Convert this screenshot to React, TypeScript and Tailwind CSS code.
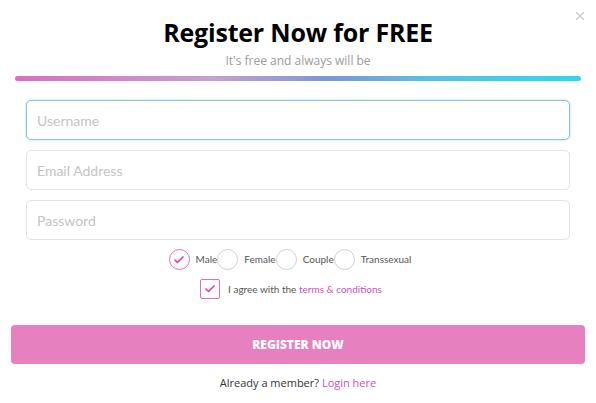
import { Check, X } from 'lucide-react';

const genders = ['Male', 'Female', 'Couple', 'Transsexual'];

function Field({ placeholder, focused }: { placeholder: string; focused?: boolean }) {
  return (
    <input
      type="text"
      placeholder={placeholder}
      className={
        'w-full h-[40px] px-[10px] rounded-[5px] bg-white text-[14px] text-gray-700 placeholder:text-[#c4c4c4] outline-none border ' +
        (focused ? 'border-[#8cbfe8] shadow-[0_0_3px_rgba(120,180,230,0.5)]' : 'border-[#e3e3e3]')
      }
    />
  );
}

export default function App() {
  return (
    <div className="relative w-[596px] h-[403px] bg-white font-['Lato',sans-serif] overflow-hidden">
      <button className="absolute right-[9px] top-[9px] text-[#c8c8c8]">
        <X className="w-[14px] h-[14px]" strokeWidth={2} />
      </button>

      <div className="pt-[15px] flex flex-col items-center">
        <h1 className="text-[25px] leading-[34px] font-bold text-black font-['Open_Sans',sans-serif] tracking-[-0.2px]">
          Register Now for FREE
        </h1>
        <p className="mt-[4px] text-[12px] leading-[16px] text-[#9a9a9a] font-['Open_Sans',sans-serif]">
          It's free and always will be
        </p>
      </div>

      <div className="mx-[15px] mt-[7px] h-[5px] rounded-full bg-[linear-gradient(90deg,#dc6cc6_0%,#c69fd2_35%,#7b98d8_55%,#56c3e4_75%,#30d7ef_100%)]" />

      <div className="mx-[26px] mt-[19px] flex flex-col gap-[10px]">
        <Field placeholder="Username" focused />
        <Field placeholder="Email Address" />
        <Field placeholder="Password" />
      </div>

      <div className="mt-[9px] flex items-center justify-center pr-[16px]">
        {genders.map((g, i) => (
          <label key={g} className="flex items-center text-[10px] text-[#555]">
            <span
              className={
                'w-[21px] h-[21px] rounded-full border flex items-center justify-center ' +
                (i === 0 ? 'border-[#e56bb9]' : 'border-[#cfcfcf]')
              }
            >
              {i === 0 && <Check className="w-[12px] h-[12px] text-[#e0449f]" strokeWidth={3.5} />}
            </span>
            <span className="ml-[6px]">{g}</span>
          </label>
        ))}
      </div>

      <div className="mt-[9px] flex items-center justify-center pr-[14px]">
        <span className="w-[20px] h-[20px] border border-[#e56bb9] rounded-[2px] flex items-center justify-center">
          <Check className="w-[12px] h-[12px] text-[#e0449f]" strokeWidth={3.5} />
        </span>
        <span className="ml-[8px] text-[10px] text-[#555]">
          I agree with the <span className="text-[#c94fb8]">terms &amp; conditions</span>
        </span>
      </div>

      <div className="mx-[11px] mt-[26px]">
        <button className="w-full h-[39px] rounded-[4px] bg-[#e780be] text-white text-[12px] font-black font-['Open_Sans',sans-serif]">
          REGISTER NOW
        </button>
      </div>

      <p className="mt-[11px] text-center text-[11px] text-[#333] font-['Open_Sans',sans-serif]">
        Already a member? <span className="text-[#c94fb8]">Login here</span>
      </p>
    </div>
  );
}
